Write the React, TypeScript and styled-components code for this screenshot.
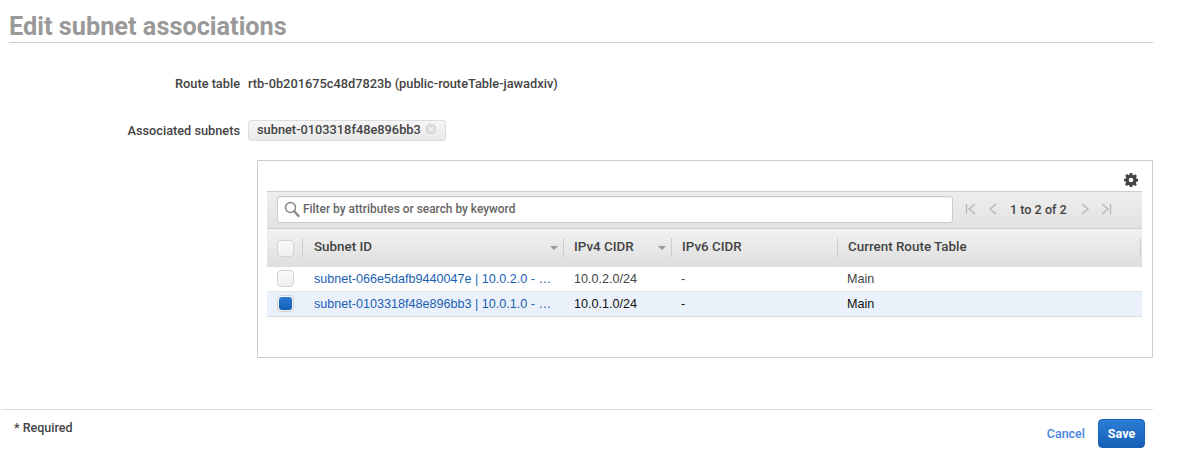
import React from "react";
import styled, { createGlobalStyle } from "styled-components";

const Global = createGlobalStyle`
  html, body { margin: 0; padding: 0; background: #fff; }
  body { font-family: Roboto, "Liberation Sans", sans-serif; color: #444; }
  * { box-sizing: border-box; }
`;

const Page = styled.div`
  width: 1202px;
  height: 476px;
  overflow: hidden;
  display: flex;
  flex-direction: column;
`;

const Header = styled.header`
  margin-left: 9px;
  width: 1144px;
  height: 43px;
  padding-top: 12px;
  border-bottom: 1px solid #ccc;
`;

const Title = styled.h1`
  margin: 0;
  font-size: 25.3px;
  line-height: 30px;
  font-weight: 700;
  color: #999;
`;

const Form = styled.div`
  display: flex;
  flex-direction: column;
  height: 366px;
`;

const Row = styled.div<{ $top: number }>`
  display: flex;
  align-items: center;
  height: 24px;
  margin-top: ${(p) => p.$top}px;
`;

const Label = styled.div`
  width: 240px;
  text-align: right;
  font-size: 12.75px;
  font-weight: 500;
  color: #444;
`;

const Value = styled.div`
  margin-left: 8px;
  font-size: 12.8px;
  font-weight: 500;
  color: #444;
`;

const Chip = styled.div`
  margin-left: 8px;
  height: 21px;
  width: 198px;
  display: flex;
  align-items: center;
  padding: 0 0 2px 8px;
  gap: 4px;
  border: 1px solid #ddd;
  border-radius: 3px;
  background: linear-gradient(#f6f6f6, #e9e9e9);
  font-size: 12.8px;
  font-weight: 500;
  color: #444;
  white-space: nowrap;
`;

const Panel = styled.section`
  margin: 18px 0 0 257px;
  width: 896px;
  height: 198px;
  border: 1px solid #ccc;
  padding: 0 10px 0 9px;
  display: flex;
  flex-direction: column;
`;

const GearRow = styled.div`
  height: 30px;
  display: flex;
  justify-content: flex-end;
  align-items: center;
  padding: 8px 4px 0 0;
  color: #444;
`;

const Toolbar = styled.div`
  height: 38px;
  border-top: 1px solid #ccc;
  border-bottom: 1px solid #ccc;
  background: linear-gradient(#eee, #e2e2e2);
  display: flex;
  align-items: center;
  padding: 0 0 2px 10px;
`;

const Search = styled.div`
  width: 676px;
  height: 27px;
  background: #fff;
  border: 1px solid #ccc;
  border-radius: 3px;
  display: flex;
  align-items: center;
  padding-left: 6px;
  gap: 3px;
  font-size: 11.9px;
  font-weight: 500;
  color: #666;
  box-shadow: inset 0 1px 1px rgba(0, 0, 0, 0.06);
`;

const Pager = styled.div`
  margin-left: 12px;
  display: flex;
  align-items: center;
  font-size: 12.6px;
  font-weight: 500;
  color: #444;
`;

const PagerBtn = styled.span<{ $gap: number }>`
  display: inline-flex;
  margin-left: ${(p) => p.$gap}px;
`;

const HeadRow = styled.div`
  height: 38px;
  display: flex;
  background: linear-gradient(#f1f1f1, #dedede);
`;

const HeadCell = styled.div<{ $w: number; $pad: number }>`
  width: ${(p) => p.$w}px;
  display: flex;
  align-items: center;
  position: relative;
  padding: 0 0 4px ${(p) => p.$pad}px;
  font-size: 13.4px;
  font-weight: 500;
  color: #444;
  &::after {
    content: "";
    position: absolute;
    right: 0;
    top: 9px;
    height: 19px;
    width: 1px;
    background: #ccc;
  }
`;

const Sort = styled.span`
  position: absolute;
  right: 6px;
  top: 17px;
  border-left: 4px solid transparent;
  border-right: 4px solid transparent;
  border-top: 4px solid #999;
`;

const BodyRow = styled.div<{ $selected?: boolean }>`
  height: 25px;
  display: flex;
  align-items: center;
  border-bottom: 1px solid ${(p) => (p.$selected ? "#d5dbe3" : "#e4e4e4")};
  background: ${(p) => (p.$selected ? "#eaf1fb" : "#fff")};
  font-family: "Liberation Sans", Arial, sans-serif;
  font-size: 12.6px;
  color: ${(p) => (p.$selected ? "#111" : "#444")};
`;

const Cell = styled.div<{ $w: number; $pad: number }>`
  width: ${(p) => p.$w}px;
  padding-left: ${(p) => p.$pad}px;
  white-space: nowrap;
  overflow: hidden;
  text-overflow: ellipsis;
`;

const LinkCell = styled(Cell)`
  color: #1a5fb4;
  padding-right: 12px;
`;

const CheckCell = styled.div`
  width: 36px;
  display: flex;
  padding: 0 0 1px 10px;
`;

const HeadCheckCell = styled(CheckCell)`
  position: relative;
  align-items: center;
  padding: 0 0 0 10px;
  &::after {
    content: "";
    position: absolute;
    right: 0;
    top: 9px;
    height: 19px;
    width: 1px;
    background: #ccc;
  }
`;

const Check = styled.span<{ $on?: boolean }>`
  width: 17px;
  height: 17px;
  border: 1px solid #d4d4d4;
  border-radius: 4px;
  background: linear-gradient(#fafafa, #efefef);
  display: flex;
  align-items: center;
  justify-content: center;
  &::after {
    content: "";
    display: ${(p) => (p.$on ? "block" : "none")};
    width: 13px;
    height: 13px;
    border-radius: 3px;
    background: linear-gradient(#2a7ad3, #135fb5);
  }
`;

const Footer = styled.footer`
  margin-left: 1px;
  width: 1152px;
  height: 67px;
  border-top: 1px solid #ddd;
  display: flex;
  align-items: flex-start;
  justify-content: space-between;
  padding: 9px 8px 0 13px;
`;

const Required = styled.div`
  font-size: 12.5px;
  font-weight: 500;
  line-height: 18px;
  color: #444;
`;

const Actions = styled.div`
  display: flex;
  align-items: center;
  gap: 13px;
`;

const Cancel = styled.a`
  margin-bottom: 1px;
  font-size: 12.5px;
  font-weight: 500;
  color: #4a85e0;
`;

const Save = styled.button`
  width: 47px;
  height: 29px;
  padding: 0;
  border: 1px solid #1a62b5;
  border-radius: 4px;
  background: linear-gradient(#2c7dd6, #1560b7);
  color: #fff;
  font-family: inherit;
  font-size: 12.5px;
  font-weight: 700;
`;

const Gear = () => (
  <svg width="14" height="14" viewBox="0 0 14 14" fill="#444" aria-hidden="true">
    <path fillRule="evenodd" d="M5.7 0h2.6l.3 1.900 1 .4L11.200 1.200 13 3l-1.100 1.600.4 1 1.900.3v2.600l-1.900.3-.4 1-.1.1 1.100 1.500L11.200 13l-1.600-1.100-1 .4-.3 1.900H5.700l-.3-1.900-1-.4L2.800 13 1 11.200l1.100-1.600-.4-1L0 8.300V5.700l1.900-.3.4-1L1.200 2.800 3 1l1.600 1.100 1-.4L5.700 0zM7 4.700a2.300 2.300 0 1 0 0 4.600 2.300 2.300 0 0 0 0-4.600z" />
  </svg>
);

const SearchIcon = () => (
  <svg width="16" height="17" viewBox="0 0 16 17" fill="none" stroke="#888" aria-hidden="true">
    <circle cx="6.500" cy="6.500" r="5" strokeWidth="1.500" />
    <path d="M10.500 10.500l4 4.500" strokeWidth="2.400" strokeLinecap="round" />
  </svg>
);

const PagerIcon = ({ d }: { d: string }) => (
  <svg width="12" height="14" viewBox="0 0 12 14" fill="none" stroke="#b4b4b4" strokeWidth="1.300" aria-hidden="true">
    <path d={d} />
  </svg>
);

const ChipClose = () => (
  <svg width="12" height="12" viewBox="0 0 12 12" aria-hidden="true">
    <circle cx="6" cy="6" r="5.500" fill="#dadada" />
    <path d="M4 4l4 4M8 4l-4 4" stroke="#f4f4f4" strokeWidth="1.200" />
  </svg>
);

const widths = [261, 108, 166, 303];

export default function App() {
  return (
    <Page>
      <Global />
      <Header>
        <Title>Edit subnet associations</Title>
      </Header>
      <Form>
        <Row $top={28}>
          <Label>Route table</Label>
          <Value>rtb-0b201675c48d7823b (public-routeTable-jawadxiv)</Value>
        </Row>
        <Row $top={23}>
          <Label>Associated subnets</Label>
          <Chip>
            subnet-0103318f48e896bb3
            <ChipClose />
          </Chip>
        </Row>
        <Panel>
          <GearRow>
            <Gear />
          </GearRow>
          <Toolbar>
            <Search>
              <SearchIcon />
              Filter by attributes or search by keyword
            </Search>
            <Pager>
              <PagerBtn $gap={0}>
                <PagerIcon d="M1.500 2v10M10 2L4 7l6 5" />
              </PagerBtn>
              <PagerBtn $gap={10}>
                <PagerIcon d="M9 2L3 7l6 5" />
              </PagerBtn>
              <PagerBtn $gap={11}>1 to 2 of 2</PagerBtn>
              <PagerBtn $gap={12}>
                <PagerIcon d="M3 2l6 5-6 5" />
              </PagerBtn>
              <PagerBtn $gap={9}>
                <PagerIcon d="M2 2l6 5-6 5M10.500 2v10" />
              </PagerBtn>
            </Pager>
          </Toolbar>
          <HeadRow>
            <HeadCheckCell>
              <Check />
            </HeadCheckCell>
            <HeadCell $w={widths[0]} $pad={11}>
              Subnet ID
              <Sort />
            </HeadCell>
            <HeadCell $w={widths[1]} $pad={10}>
              IPv4 CIDR
              <Sort />
            </HeadCell>
            <HeadCell $w={widths[2]} $pad={10}>IPv6 CIDR</HeadCell>
            <HeadCell $w={widths[3]} $pad={10}>Current Route Table</HeadCell>
          </HeadRow>
          <BodyRow>
            <CheckCell>
              <Check />
            </CheckCell>
            <LinkCell $w={widths[0]} $pad={11}>subnet-066e5dafb9440047e | 10.0.2.0 - 10.0.2.255</LinkCell>
            <Cell $w={widths[1]} $pad={10}>10.0.2.0/24</Cell>
            <Cell $w={widths[2]} $pad={9}>-</Cell>
            <Cell $w={widths[3]} $pad={9}>Main</Cell>
          </BodyRow>
          <BodyRow $selected>
            <CheckCell>
              <Check $on />
            </CheckCell>
            <LinkCell $w={widths[0]} $pad={11}>subnet-0103318f48e896bb3 | 10.0.1.0 - 10.0.1.255</LinkCell>
            <Cell $w={widths[1]} $pad={10}>10.0.1.0/24</Cell>
            <Cell $w={widths[2]} $pad={9}>-</Cell>
            <Cell $w={widths[3]} $pad={9}>Main</Cell>
          </BodyRow>
        </Panel>
      </Form>
      <Footer>
        <Required>* Required</Required>
        <Actions>
          <Cancel>Cancel</Cancel>
          <Save>Save</Save>
        </Actions>
      </Footer>
    </Page>
  );
}
